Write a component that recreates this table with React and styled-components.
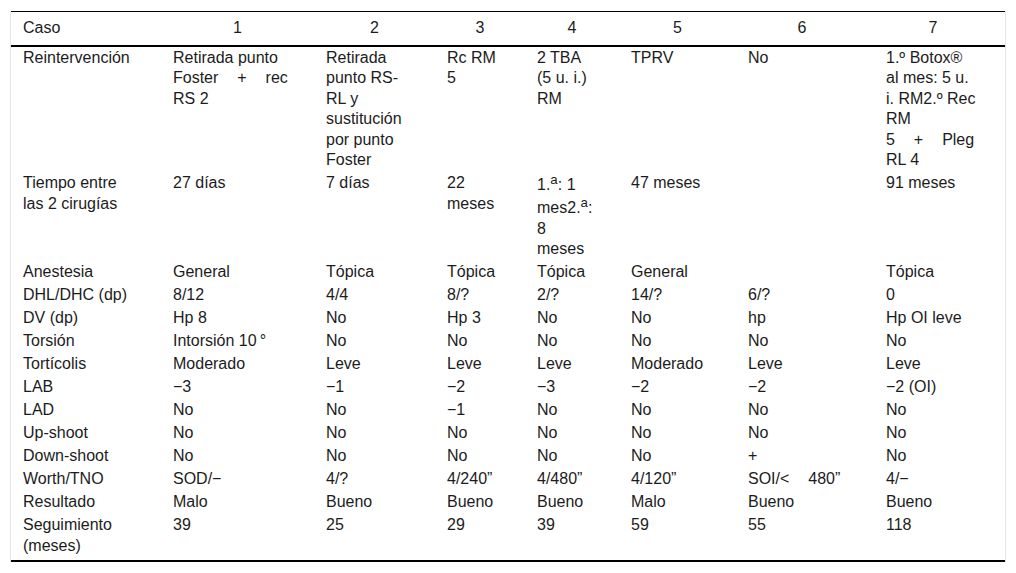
import React from 'react';
import styled, { createGlobalStyle } from 'styled-components';

const GlobalStyle = createGlobalStyle`
  html, body {
    margin: 0;
    padding: 0;
    background: #ffffff;
  }
  body {
    font-family: "Liberation Sans", Arial, sans-serif;
    color: #1c1c1c;
  }
`;

const Page = styled.div`
  padding: 11px 10px 0 10px;
`;

const Frame = styled.div`
  width: 994px;
  border-left: 1px solid #e6e6e6;
  border-right: 1px solid #e6e6e6;
`;

const Table = styled.table`
  width: 994px;
  table-layout: fixed;
  border-collapse: collapse;
  font-size: 16px;
  line-height: 20.5px;
  border-top: 1px solid #000;
  border-bottom: 2px solid #000;
`;

const Col = styled.col`
  width: ${p => p.$w}px;
`;

const Th = styled.th`
  padding: 6px ${p => p.$padRight || 12}px 6px 12px;
  font-weight: normal;
  text-align: ${p => (p.$left ? 'left' : 'center')};
  border-bottom: 2px solid #000;
  vertical-align: top;
`;

const Td = styled.td`
  padding: 1.25px 26px ${p => (p.$last ? '4px' : '1.25px')} 12px;
  vertical-align: top;
  text-align: left;
`;

const Line = styled.span`
  display: block;
  white-space: nowrap;
  word-spacing: ${p => (p.$spread ? '14.5px' : 'normal')};
`;

const Sup = styled.sup`
  font-size: 0.83em;
  line-height: 14.5px;
`;

const widths = [150, 153, 121, 90, 94, 117, 138, 131];
const heads = ['Caso', '1', '2', '3', '4', '5', '6', '7'];

const sp = t => ({ t, spread: true });

const rows = [
  [
    ['Reintervención'],
    ['Retirada punto', sp('Foster + rec'), 'RS 2'],
    ['Retirada', 'punto RS-', 'RL y', 'sustitución', 'por punto', 'Foster'],
    ['Rc RM', '5'],
    ['2 TBA', '(5 u. i.)', 'RM'],
    ['TPRV'],
    ['No'],
    ['1.º Botox®', 'al mes: 5 u.', 'i. RM2.º Rec', 'RM', sp('5 + Pleg'), 'RL 4'],
  ],
  [
    ['Tiempo entre', 'las 2 cirugías'],
    ['27 días'],
    ['7 días'],
    ['22', 'meses'],
    [
      <>1.<Sup>a</Sup>: 1</>,
      <>mes2.<Sup>a</Sup>:</>,
      '8',
      'meses',
    ],
    ['47 meses'],
    [],
    ['91 meses'],
  ],
  [['Anestesia'], ['General'], ['Tópica'], ['Tópica'], ['Tópica'], ['General'], [], ['Tópica']],
  [['DHL/DHC (dp)'], ['8/12'], ['4/4'], ['8/?'], ['2/?'], ['14/?'], ['6/?'], ['0']],
  [['DV (dp)'], ['Hp 8'], ['No'], ['Hp 3'], ['No'], ['No'], ['hp'], ['Hp OI leve']],
  [['Torsión'], ['Intorsión 10\u2009°'], ['No'], ['No'], ['No'], ['No'], ['No'], ['No']],
  [['Tortícolis'], ['Moderado'], ['Leve'], ['Leve'], ['Leve'], ['Moderado'], ['Leve'], ['Leve']],
  [['LAB'], ['−3'], ['−1'], ['−2'], ['−3'], ['−2'], ['−2'], ['−2 (OI)']],
  [['LAD'], ['No'], ['No'], ['−1'], ['No'], ['No'], ['No'], ['No']],
  [['Up-shoot'], ['No'], ['No'], ['No'], ['No'], ['No'], ['No'], ['No']],
  [['Down-shoot'], ['No'], ['No'], ['No'], ['No'], ['No'], ['+'], ['No']],
  [['Worth/TNO'], ['SOD/−'], ['4/?'], ['4/240”'], ['4/480”'], ['4/120”'], [sp('SOI/< 480”')], ['4/−']],
  [['Resultado'], ['Malo'], ['Bueno'], ['Bueno'], ['Bueno'], ['Malo'], ['Bueno'], ['Bueno']],
  [['Seguimiento', '(meses)'], ['39'], ['25'], ['29'], ['39'], ['59'], ['55'], ['118']],
];

function Cell({ lines, last }) {
  return (
    <Td $last={last}>
      {lines.map((l, i) =>
        l && typeof l === 'object' && l.spread ? (
          <Line key={i} $spread>{l.t}</Line>
        ) : (
          <Line key={i}>{l}</Line>
        )
      )}
    </Td>
  );
}

export default function App() {
  return (
    <Page>
      <GlobalStyle />
      <Frame>
        <Table>
          <colgroup>
            {widths.map((w, i) => (
              <Col key={i} $w={w} />
            ))}
          </colgroup>
          <thead>
            <tr>
              {heads.map((h, i) => (
                <Th key={h} $left={i === 0} $padRight={i === 7 ? 25 : i === 6 ? 18 : 12}>
                  {h}
                </Th>
              ))}
            </tr>
          </thead>
          <tbody>
            {rows.map((r, ri) => (
              <tr key={ri}>
                {r.map((lines, ci) => (
                  <Cell key={ci} lines={lines} last={ri === rows.length - 1} />
                ))}
              </tr>
            ))}
          </tbody>
        </Table>
      </Frame>
    </Page>
  );
}
